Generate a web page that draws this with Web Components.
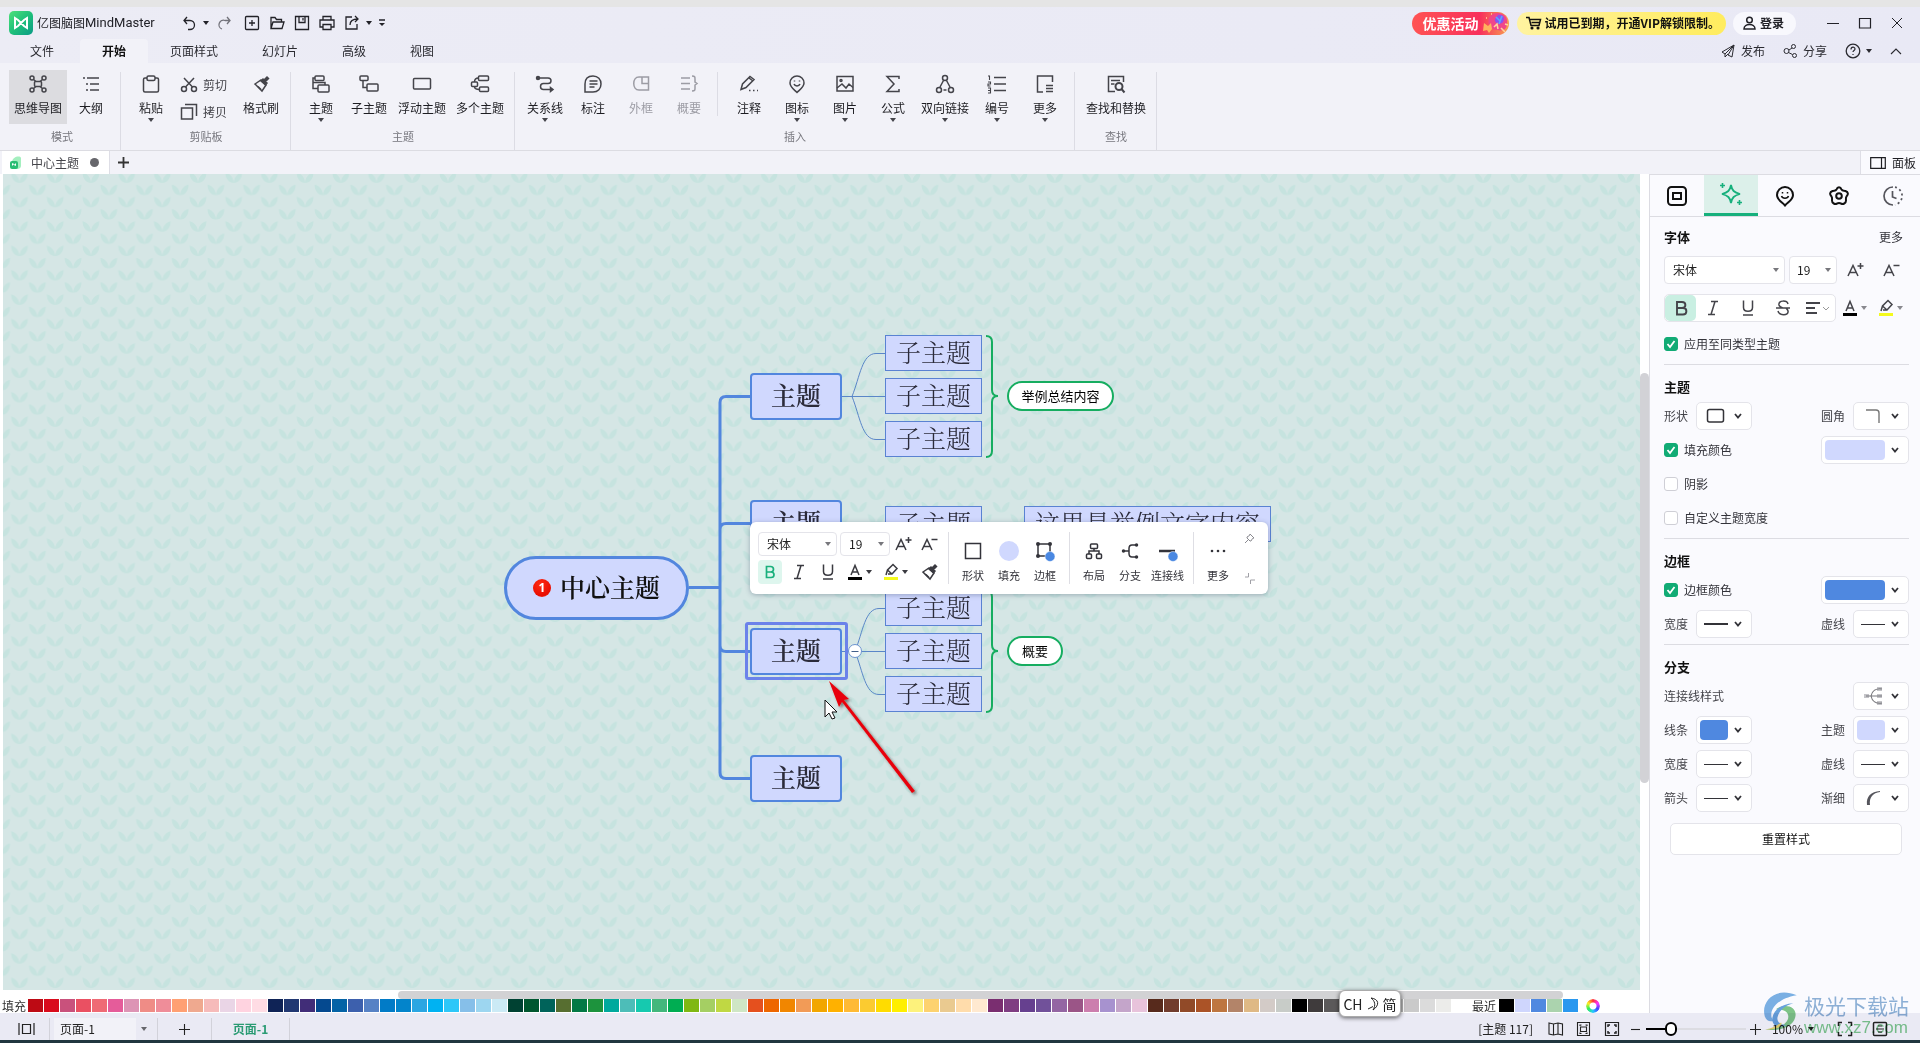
<!DOCTYPE html>
<html lang="zh-CN">
<head>
<meta charset="utf-8">
<title>亿图脑图MindMaster</title>
<style>
html,body{margin:0;height:100%}
body{font:12px/16px "Noto Sans CJK SC",sans-serif;color:#1d1d22;background:#f2f2f8}
</style>
</head>
<body>
<app-window></app-window>
<script>
const BASE = `
*{box-sizing:border-box}
button,select,input{font:inherit;color:inherit;margin:0;padding:0;border:0;background:none;border-radius:0}
button{display:inline-flex;align-items:center;justify-content:center;white-space:nowrap;cursor:pointer}
select{appearance:none;outline:none}
`;
function define(name, css, html, ready) {
  customElements.define(name, class extends HTMLElement {
    connectedCallback() {
      if (this.shadowRoot) return;
      const root = this.attachShadow({ mode: 'open' });
      const body = typeof html === 'function' ? html(this) : html;
      root.innerHTML = `<style>${BASE}${css}</style>${body}`;
      if (ready) ready(root, this);
    }
  });
}

/* Icon library: [width, height, markup] */
const BRUSH = '<path d="M3 9 9 5l5 5-4 6z"/><path d="M9 6 11 4l1 1 3-3 1.500 1.500-3 3L15 8l-1.500 2z" fill="currentColor"/><path d="M6 11.500l3 3"/>';
const SMILE = '<path d="M10 2a7 7 0 0 1 7 7c0 4-4 6.500-7 9.500C7 15.500 3 13 3 9a7 7 0 0 1 7-7z"/><path d="M7 10c1 2.600 5 2.600 6 0"/><path d="M7.500 6.500v1M12.500 6.500v1"/>';
const ICONS = {
  caret:[8,4,'<path d="M1 0h6L4 4z" fill="currentColor" stroke="none"/>'],
  chev:[10,8,'<path d="M2 2l3 3.500L8 2" stroke-width="1.800"/>'],
  logo:[24,24,'<defs><linearGradient id="g" x1="0" y1="0" x2="1" y2="1"><stop offset="0" stop-color="#4fe07a"/><stop offset=".5" stop-color="#1fc07a"/><stop offset="1" stop-color="#0a9a86"/></linearGradient></defs><rect width="24" height="24" rx="5" fill="url(#g)" stroke="none"/><path d="M6 7v10l3-2 6-6 3-2v10l-3-2-6-6z" stroke="#fff" stroke-width="2"/>'],
  undo:[16,16,'<path d="M6 2 3 5.500 6 9M3 5.500h6a4.500 4.500 0 0 1 0 9H7" stroke-width="1.300"/>'],
  redo:[16,16,'<g opacity=".6"><path d="M10 2l3 3.500L10 9M13 5.500H8a4.500 4.500 0 0 0-3 8.500" stroke-width="1.300"/></g>'],
  newdoc:[16,16,'<g stroke-width="1.300"><rect x="1.500" y="1.500" width="13" height="13" rx="1"/><path d="M8 5v6M5 8h6"/></g>'],
  open:[16,16,'<path d="M2 13.500v-11h4l1.500 2h5v2.500M2 13.500l2-6.500h11l-2 6.500z" stroke-width="1.300"/>'],
  save:[16,16,'<g stroke-width="1.300"><path d="M1.500 1.500h13v13h-13z"/><path d="M5 1.500v6h6v-6M9 3v2.500"/></g>'],
  print:[16,16,'<g stroke-width="1.300"><path d="M4 5V1.500h8V5M4 12H1V5h14v7h-3"/><path d="M4 9.500h8v5H4z"/></g>'],
  export:[16,16,'<g stroke-width="1.300"><path d="M8 2H2v12h11V9"/><path d="M6 10c0-4 3-6 8-6M11 1l3 3-3 3"/></g>'],
  more:[8,8,'<path d="M1 1h6"/><path d="M1 4h6L4 7z" fill="currentColor" stroke="none"/>'],
  cart:[15,14,'<path d="M0 1.500h3l2 8h8l1.500-6H4M5.500 6.500h8"/><circle cx="6" cy="12" r=".8"/><circle cx="12" cy="12" r=".8"/>'],
  user:[13,14,'<circle cx="6.500" cy="4" r="2.800"/><path d="M1 13c0-6 11-6 11 0z"/>'],
  min:[12,12,'<path d="M0 6.500h12" stroke-width="1"/>'],
  max:[12,12,'<path d="M.500 1.500h11v9.500h-11z" stroke-width="1.200"/>'],
  close:[12,12,'<path d="M1 1l10 10M11 1 1 11" stroke-width="1"/>'],
  plane:[14,14,'<path d="M13 1 1 8l3 2zM13 1 11 13l-4-2zM4 10v3l3-3" stroke-width="1"/>'],
  share:[14,14,'<g stroke-width="1"><circle cx="3.500" cy="7" r="2.500"/><circle cx="10.500" cy="2.500" r="2"/><circle cx="11.500" cy="11.500" r="2"/><path d="M6 6l3-2M5.500 8.500l4 2"/></g>'],
  help:[16,16,'<circle cx="8" cy="8" r="6.800" stroke-width="1.300"/><path d="M6 6.500c0-3 4-3 4-.5 0 1.500-2 1.500-2 3M8 11v1" stroke-width="1.200"/>'],
  up:[12,12,'<path d="M1 9l5-5 5 5" stroke-width="1.100"/>'],
  mind:[20,20,'<rect x="6.500" y="7.500" width="7" height="5" rx="1"/><circle cx="4" cy="4" r="2"/><circle cx="16" cy="4" r="2"/><circle cx="4" cy="16" r="2"/><circle cx="16" cy="16" r="2"/><path d="M5.500 5.500 8 7.500M14.500 5.500 12 7.500M5.500 14.500 8 12.500M14.500 14.500 12 12.500"/>'],
  outline:[20,20,'<path d="M2 4h2M6 4h12M5 10h2M9 10h9M5 16h2M9 16h9"/>'],
  paste:[20,20,'<rect x="2.500" y="4" width="15" height="14" rx="1.500"/><rect x="6" y="2" width="8" height="4.500" rx="1.500" fill="#f2f2f8"/>'],
  cut:[18,18,'<circle cx="4" cy="13" r="2.500"/><circle cx="14" cy="13" r="2.500"/><path d="M5.500 11 14 2M12.500 11 4 2"/>'],
  copy:[18,18,'<path d="M1.500 5h11v11h-11z"/><path d="M5 1.500h11.500V13"/>'],
  brush:[18,18,BRUSH],
  topic:[20,20,'<rect x="4" y="2" width="9" height="4.500" rx="1"/><rect x="7" y="11" width="11" height="7" rx="1"/><path d="M4 4H2v10.500h5M2 8.500h12V11"/>'],
  sub:[20,20,'<rect x="1" y="2" width="8" height="4.500" rx="1"/><rect x="8" y="10" width="11" height="7" rx="1"/><path d="M4 6.500v7h4"/>'],
  float:[20,20,'<rect x="1.500" y="4.500" width="17" height="10.500" rx="1"/>'],
  multi:[20,20,'<rect x="8.500" y="2" width="10" height="4.500" rx="1"/><rect x="1.500" y="8" width="6" height="4.500" rx="1"/><rect x="9.500" y="13" width="9" height="4.500" rx="1"/><path d="M8.500 4C5 4 4.500 6 4.500 8M4.500 12.500c0 2 1 3 5 3"/>'],
  relation:[20,20,'<path d="M3 4h10c4 0 4 5.500 0 5.500H8.500c-4 0-4 6 0 6H17"/><circle cx="3" cy="4" r="1.500" fill="currentColor"/><path d="M15.500 13.500 18 15.500 15.500 17.500z" fill="currentColor"/>'],
  note:[20,20,'<path d="M10 2c5 0 8 3.500 8 8s-3 8-8 8H2v-8c0-5 3-8 8-8z"/><path d="M6.500 7h8M6.500 10h8M6.500 13h5"/>'],
  outer:[20,20,'<path d="M8 3h9.500v13H8c-7 0-7-13 0-13zM11 3v6.500h6.500"/>'],
  summary:[20,20,'<path d="M2 4h9M2 9.500h9M2 15h9M13 2c3 0 3 1 3 3v3l2 1.500-2 1.500v3c0 2 0 3-3 3"/>'],
  comment:[20,20,'<path d="M2 15.500 3.500 10 11 2.500l4 3L7 13.500zM10 4l4 3M2 15.500l5-2M10 16.500h1.500M14 16.500h1.500M18 16.500h1"/>'],
  mark:[20,20,SMILE],
  image:[20,20,'<rect x="2" y="2.500" width="16" height="14.500"/><circle cx="6" cy="6.500" r="1"/><path d="M2 14l5-4 4 4 3-4 4 3.500"/>'],
  sigma:[20,20,'<path d="M16 5V2.500H4L11 10l-7 7.500h12V15"/>'],
  link:[20,20,'<circle cx="10" cy="4" r="2.500"/><circle cx="4" cy="16" r="2.500"/><circle cx="16" cy="16" r="2.500"/><path d="M8.500 6.500 5 13M11.500 6.500 15 13M8.500 16h3"/>'],
  number:[20,20,'<path d="M7 3.500h12M7 10h12M7 16.500h12"/><path d="M1 2h1.500v4M1 8h2.500v2H1v2h2.500M1 14h2.500v5H1M1 16.500h2.500" stroke-width="1.100"/>'],
  moredoc:[20,20,'<path d="M17.500 8V2H2.500v16H8M11 11.500h7M11 14.500h7M11 17.500h7"/>'],
  find:[20,20,'<path d="M17.500 8V2.500h-15v15H9M5 6.500h9M5 10h3.500"/><circle cx="13" cy="12.500" r="3.500" stroke-width="2"/><path d="M15.500 15l3 3.500" stroke-width="2"/>'],
  doc:[12,14,'<path d="M2 6c0-5 8-7 9-4v8c0 2-2 3-4 3H2z" fill="#a4efbf" stroke="none"/><rect x="0" y="5" width="8" height="8" rx="2" fill="#29bd73" stroke="none"/><path d="M2.500 9.500v-2l3 2v-2" stroke="#fff" stroke-width="1"/>'],
  plus:[13,13,'<path d="M6.500 1v11M1 6.500h11" stroke-width="1.800"/>'],
  thinplus:[13,13,'<path d="M6.500 1v11M1 6.500h11" stroke-width="1.100"/>'],
  minus:[12,13,'<path d="M1 6.500h9" stroke-width="1.100"/>'],
  panel:[16,12,'<path d="M.700.700h14.600v10.600H.700zM11.500.700v10.600" stroke-width="1.200"/>'],
  t1:[22,22,'<rect x="2" y="2" width="18" height="18" rx="3.500" stroke-width="2"/><rect x="7" y="8" width="8" height="6" stroke-width="2"/>'],
  t2:[24,24,'<path d="M12 3c1 5.500 3 7.500 9 9-6 1.500-8 3.500-9 9-1-5.500-3-7.500-9-9 6-1.500 8-3.500 9-9z" stroke-width="1.800"/><path d="M3.500 1v5M1 3.500h5M20.500 18v5M18 20.500h5" stroke-width="1.600"/>'],
  t3:[22,22,'<path d="M11 2a8 8 0 0 1 8 8c0 5-5 7-8 10.500C8 17 3 15 3 10a8 8 0 0 1 8-8z" stroke-width="2"/><path d="M7.500 11c1 3 6 3 7 0M8.500 7v1.500M13.500 7v1.500"/>'],
  t4:[22,22,'<path d="M8.500 4.500c1-3 4-3 5 0 1 1.500 2 1 4 1.500 3 1 3 3.500 1 5.500-1 1.500-.5 2.500-.5 4 0 3-3 4-5 3-1.500-.8-2.500-.8-4 0-2 1-5 0-5-3 0-1.500.5-2.500-.5-4-2-2-2-4.500 1-5.500 2-.5 3 0 4-1.500z" stroke-width="2"/><circle cx="11" cy="11" r="2.800" stroke-width="2"/>'],
  t5:[22,22,'<g stroke="#55555c" stroke-width="1.700"><path d="M11 2a9 9 0 0 0 0 18M10.500 6v6l4 1.500"/><path d="M13 2.200a9 9 0 0 1 0 17.600" stroke-dasharray="2 2.800"/></g>'],
  check:[14,14,'<path d="M3.500 7l2.500 3 4.500-6" stroke="#fff" stroke-width="1.800"/>'],
  shape:[20,16,'<rect x="1.500" y="1.500" width="16" height="12.500" rx="2"/>'],
  corner:[20,16,'<path d="M3 2h10q3 0 3 3v10" stroke="#777" stroke-width="1.400"/>'],
  line:[24,5,'<path d="M0 2.500h24" stroke-width="1"/>'],
  thick:[24,4,'<path d="M0 2h24" stroke-width="2"/>'],
  fork:[22,18,'<path d="M2 9h5M15 2h5M15 9h5M15 16h5" stroke="#c4c4c8" stroke-width="4"/><path d="M4 9h16M20 2c-6-1-10 2-11 7 1 5 5 8 11 7" stroke="#77777c" stroke-width="1.200"/>'],
  taper:[20,16,'<path d="M4 15C3 6 8 2 17 1v1C10 3 6 7 7 15z" fill="#55555c" stroke="none"/>'],
  bold:[16,18,'<path d="M4 3h5c4.500 0 4.500 6 0 6H4zM4 9h6c4.500 0 4.500 6.500 0 6.500H4z" stroke-width="1.900"/>'],
  sbold:[16,18,'<path d="M4.500 3.500h4c4 0 4 5.500 0 5.500h-4zM4.500 9h4.500c4 0 4 5.500 0 5.500H4.500z" stroke-width="1.700"/>'],
  italic:[16,18,'<path d="M6 2.500h7M3 15.500h7M10 2.500l-4 13"/>'],
  under:[16,18,'<path d="M3.500 1.500v7c0 5 9 5 9 0v-7M3 16h10"/>'],
  strike:[16,18,'<path d="M13 5c-1-4-10-4-9 1 .5 2 3 2.500 4 3M3 12c1 5 11 5 10 0-.3-1.500-1-2-2-3M1 9h14"/>'],
  align:[24,14,'<path d="M1 2h14M1 7h9M1 12h11" stroke-width="1.800"/><path d="M18 6l3 3 3-3" stroke="#999" stroke-width="1"/>'],
  aplus:[20,18,'<path d="M3 15 8 4.500 13 15M5 11.500h6"/><path d="M15.500 2v6M12.500 5h6"/>'],
  aminus:[20,18,'<path d="M3 15 8 4.500 13 15M5 11.500h6"/><path d="M12.500 4.500h6"/>'],
  acolor:[14,18,'<path d="M3 12 7 2.500 11 12M4.500 9h5"/><path d="M0 15.500h14" stroke="#000" stroke-width="3"/>'],
  marker:[14,18,'<path d="M2 12 3.500 7 9 1.500l4 4L8 11H4M3.500 7 8 11"/><path d="M0 15.500h14" stroke="#f4fa1c" stroke-width="3"/>'],
  square:[18,18,'<path d="M1.500 1.500h15v15h-15z"/>'],
  fill:[20,20,'<circle cx="10" cy="10" r="10" fill="#d0d8fe" stroke="none"/>'],
  frame:[20,20,'<path d="M3 3h12v12H3z"/><g fill="currentColor" stroke="none"><circle cx="3" cy="3" r="2"/><circle cx="15" cy="3" r="2"/><circle cx="3" cy="15" r="2"/></g><circle cx="15" cy="15.500" r="5" fill="#4a88e2" stroke="#fff" stroke-width=".500"/>'],
  layout:[18,18,'<rect x="5.500" y="2" width="7" height="4.500" rx="1"/><rect x="1.500" y="12" width="5" height="4.500" rx="1"/><rect x="11.500" y="12" width="5" height="4.500" rx="1"/><path d="M9 6.500V9M4 12V9h10v3"/>'],
  branch:[18,18,'<path d="M15 3h-4c-3 0-3 2-3 3.500v5C8 13 8 15 11 15h4M3 9h5"/><g fill="currentColor"><circle cx="15.500" cy="3" r="1"/><circle cx="2.500" cy="9" r="1"/><circle cx="15.500" cy="15" r="1"/></g>'],
  conn:[22,20,'<path d="M2 10h16" stroke-width="2.500"/><circle cx="16" cy="15.500" r="5" fill="#4a88e2" stroke="#fff" stroke-width=".500"/>'],
  dots:[16,8,'<g fill="currentColor" stroke="none"><circle cx="2" cy="4" r="1.300"/><circle cx="8" cy="4" r="1.300"/><circle cx="14" cy="4" r="1.300"/></g>'],
  pin:[11,11,'<path d="M6 1l4 4-1.500.500L7 8H6L3 5V4l2.500-1.500zM4 7 1 10" stroke="#8a8a90" stroke-width="1"/>'],
  size:[11,11,'<path d="M1 4h3.500V0M6.500 11V7H11" stroke="#a0a0a6" stroke-width="1"/>'],
  pages:[17,14,'<path d="M1 1v12M16 1v12M4.500 2.500h8v9h-8z" stroke-width="1.200"/>'],
  map:[16,16,'<path d="M1 2l4.500 1 4.500-1 4.500 1v11L10 13l-4.500 1L1 13zM5.500 3v11M10 2v11" stroke-width="1.100"/>'],
  fit:[16,16,'<path d="M1.500 1.500h12v13h-12zM4.500 6h6v4.500h-6zM4 5V4h1.500M11 5V4H9.500M4 11.500v1h1.500M11 11.500v1H9.500" stroke-width="1.100"/>'],
  full:[16,16,'<path d="M1.500 1.500h13v13h-13z" stroke-width="1.200"/><path d="M4 6V4h2M10 4h2v2M12 10v2h-2M6 12H4v-2"/>'],
  corners:[16,16,'<path d="M5 1.500H1.500V5M11 1.500h3.500V5M14.500 11v3.500H11M5 14.500H1.500V11"/>'],
  fitpage:[16,16,'<rect x="1.500" y="1.500" width="13" height="13" rx="1"/><path d="M4 8h8M6 5h4M6 11h4" stroke-width="1.200"/>'],
  wheel:[16,16,''],
  party:[28,24,'<path d="M8 7c4-8 17-6 18 2 1 8-3 12-9 10-8 0-11-6-9-12z" fill="#f0468a" stroke="none"/><path d="M17 4c6-1 7 4 5 7s-9 2-8-3z" fill="#8a52f0" stroke="none"/><path d="M3 12l4 3 3-3 1 6-3 4-2-3-4 1z" fill="#ffb35e" stroke="none"/><path d="M13 16l3-3 1 5M20 17l4 4M24 13l3 1M5 7h1M10 3h1" stroke="#ffd49a" stroke-width="1.600"/><path d="M15 6l4 4M21 5l-3 8" stroke="#59a7ff" stroke-width="1.600"/>']
};
define('mm-icon', `:host{display:inline-flex;flex:none;align-items:center;justify-content:center}svg{display:block;overflow:visible}
.wheel{width:14px;height:14px;border-radius:50%;background:conic-gradient(#f33,#f3f,#44f,#2cf,#3e5,#fe2,#f33);-webkit-mask:radial-gradient(circle,transparent 3px,#000 4px)}`,
  el => {
    const n = el.getAttribute('name');
    if (n === 'wheel') return '<div class="wheel"></div>';
    const [w, h, m] = ICONS[n];
    return `<svg width="${w}" height="${h}" viewBox="0 0 ${w} ${h}" fill="none" stroke="currentColor" stroke-width="1.500" aria-hidden="true">${m}</svg>`;
  });
const ic = n => `<mm-icon name="${n}"></mm-icon>`;
const ibtn = (n, label, cls = '') => `<button type="button" class="${cls}" aria-label="${label}">${ic(n)}</button>`;

/* Title bar */
define('title-bar', `
:host{display:flex;align-items:center;height:32px;padding-left:9px;color:#222228}
h1{margin:0 22px 0 4px;font-size:12px;font-weight:400;line-height:24px;display:flex}
h1 span{font:13px/24px Roboto,sans-serif}
.quick{display:flex;align-items:center}
.quick button{width:25px;height:24px}
.quick .c{width:8px}.quick .m{width:18px}.quick .r{width:30px}
.sp{flex:1}
.pill{height:23px;border-radius:12px;font-weight:700;gap:4px}
.sale{width:97px;justify-content:flex-start;padding-left:11px;gap:2px;font-size:14px;color:#fff;background:linear-gradient(90deg,#ff5353,#f8305c 70%,#f7a04f)}
.vip{margin-left:8px;padding:0 6px 0 9px;color:#111;background:linear-gradient(90deg,#fff3a0,#ffec5e)}
.login{margin:0 21px 0 7px;padding:0 12px 0 10px;background:#f8f8fd}
.w{width:32px;height:28px;margin-right:0}
.end{width:7px}
`, `${ic('logo')}<h1>亿图脑图<span>MindMaster</span></h1>
<div class="quick">${ibtn('undo','撤销')}${ibtn('caret','撤销列表','c')}${ibtn('redo','重做','r')}${['newdoc|新建','open|打开','save|保存','print|打印','export|导出'].map(s=>ibtn(...s.split('|'))).join('')}${ibtn('caret','导出列表','c')}${ibtn('more','自定义','m')}</div>
<span class="sp"></span>
<button class="pill sale">优惠活动${ic('party')}</button>
<button class="pill vip">${ic('cart')}试用已到期，开通VIP解锁限制。</button>
<button class="pill login">${ic('user')}登录</button>
${ibtn('min','最小化','w')}${ibtn('max','最大化','w')}${ibtn('close','关闭','w')}<span class="end"></span>`);

define('menu-tabs', `
:host{display:flex;height:24px;padding-left:4px;color:#2a2a30}
button{padding:0 22px;height:24px}
.file{padding:0 26px}
.on{background:#f2f2f8;font-weight:700;color:#111;border-radius:4px 4px 0 0}
.sp{flex:1}
.r{padding:0;gap:6px;margin-right:18px}
.h{padding:0;gap:4px;margin:0 7px 0 0}
.u{padding:0;width:32px;margin-right:8px}
`, `<button class="file">文件</button><button class="on">开始</button><button>页面样式</button><button>幻灯片</button><button>高级</button><button>视图</button>
<span class="sp"></span><button class="r">${ic('plane')}发布</button><button class="r">${ic('share')}分享</button><button class="h" aria-label="帮助">${ic('help')}${ic('caret')}</button>${ibtn('up','收起','u')}`);

/* Ribbon */
define('ribbon-item', `
:host{display:block;width:48px;height:54px}
:host([wide]){width:58px}
:host([link]){width:56px}
:host([find]){width:70px}
:host([active]){background:#dcdce0}
:host([off]) button{color:#9c9ca4}
button{flex-direction:column;justify-content:flex-start;width:100%;height:100%;padding-top:4px}
mm-icon{color:#44444a;height:20px}
:host([off]) mm-icon{color:#9c9ca4}
.t{margin-top:6px;line-height:16px}
.c{height:4px;margin-top:2px}
`, el => `<button type="button">${ic(el.getAttribute('icon'))}<span class="t"><slot></slot></span>${el.hasAttribute('menu') ? '<mm-icon class="c" name="caret"></mm-icon>' : ''}</button>`);
define('ribbon-group', `
:host{display:flex;flex-direction:column;align-items:center;padding:7px 6px 0;background:linear-gradient(#dcdce4,#dcdce4) right bottom/1px 78px no-repeat}
.row{display:flex}
.l{margin-top:4px;font-size:11px;color:#77777e}
`, el => `<div class="row"><slot></slot></div><div class="l">${el.getAttribute('label')}</div>`);
const item = (i, t, a = '') => `<ribbon-item icon="${i}" ${a}>${t}</ribbon-item>`;
define('ribbon-bar', `
:host{display:flex;height:88px;background:#f2f2f8;border-bottom:1px solid #dcdce2;padding-left:3px}
.small{display:flex;flex-direction:column;width:62px;padding:2px 0 0 5px;gap:2px}
.small button{justify-content:flex-start;gap:5px;height:25px;color:#44444a}
.s{width:12px;height:44px;margin-top:2px;background:linear-gradient(#dcdce4,#dcdce4) 4px 0/1px 100% no-repeat}
`, `<ribbon-group label="模式">${item('mind','思维导图','wide active')}${item('outline','大纲')}</ribbon-group>
<ribbon-group label="剪贴板">${item('paste','粘贴','menu')}<div class="small"><button>${ic('cut')}剪切</button><button>${ic('copy')}拷贝</button></div>${item('brush','格式刷')}</ribbon-group>
<ribbon-group label="主题">${item('topic','主题','menu')}${item('sub','子主题')}${item('float','浮动主题','wide')}${item('multi','多个主题','wide')}</ribbon-group>
<ribbon-group label="插入">${item('relation','关系线','menu')}${item('note','标注')}${item('outer','外框','off')}${item('summary','概要','off')}<span class="s"></span>${item('comment','注释')}${item('mark','图标','menu')}${item('image','图片','menu')}${item('sigma','公式','menu')}${item('link','双向链接','link menu')}${item('number','编号','menu')}${item('moredoc','更多','menu')}</ribbon-group>
<ribbon-group label="查找">${item('find','查找和替换','find')}</ribbon-group>`);

define('doc-tabs', `
:host{display:flex;height:23px;background:#f2f2f8;padding-left:2px}
.tab{width:108px;background:#fff;justify-content:flex-start;padding-left:8px;gap:9px;border-right:1px solid #dedee6;color:#44444a}
i{width:9px;height:9px;border-radius:50%;background:#66666b;margin-left:2px}
.add{width:27px;color:#333}
.sp{flex:1}
.panel{background:#fafafe;border-left:1px solid #dedee6;padding:0 4px 0 9px;gap:6px}
`, `<button class="tab">${ic('doc')}中心主题<i></i></button>${ibtn('plus','新建标签','add')}<span class="sp"></span><button class="panel">${ic('panel')}面板</button>`);

/* Mind map */
define('mind-node', `
:host{position:absolute;display:flex;align-items:center;justify-content:center;white-space:nowrap;color:#2b2b3a;font:25px/34px "Noto Serif CJK SC","Noto Serif SC","Noto Sans CJK SC",serif;background:#d0d8fe;border:1px solid #5a82d2;padding-bottom:4px}
:host([kind=center]){border:3px solid #5286de;border-radius:32px;color:#111;font-weight:600;gap:9px}
:host([kind=topic]){border:2px solid #5286de;border-radius:4px;font-weight:600;padding-bottom:5px}
:host([kind=sub]){font-weight:300}
:host([kind=pill]){font:13px/20px "Noto Sans CJK SC",sans-serif;color:#000;background:#fff;border:2px solid #16ad60;border-radius:15px;padding:0}
`, '<slot></slot>');

const pick = (label, val, opts) => `<label class="pick"><select aria-label="${label}"><option>${val}</option>${opts.map(o=>`<option>${o}</option>`).join('')}</select>${ic('caret')}</label>`;
const PICK = `
.pick{position:relative;display:flex;align-items:center;background:#fff;border:1px solid #e4e4ea;border-radius:4px}
.pick select{flex:1;min-width:0;width:100%;height:100%;padding-left:8px;color:#222}
.pick mm-icon{position:absolute;right:4px;color:#77777c;pointer-events:none}
`;
define('float-bar', `
:host{display:flex;height:72px;background:#fff;border-radius:6px;box-shadow:0 1px 5px rgba(40,60,90,.35);padding:10px 8px;color:#3a3a40}
${PICK}
.l{display:flex;flex-direction:column;gap:4px;width:186px}
.r{display:flex;height:24px;align-items:center}
.r button{height:24px}
.a{width:79px;height:24px;margin-right:3px;display:flex}.b{width:50px;height:24px;display:flex}.a .pick,.b .pick{flex:1}
.k{width:26px}
.bold{width:24px;background:#def6ee;border-radius:4px;color:#19b07c;margin-right:2px}
.i{width:29px}.g{width:36px;gap:3px}
.sep{width:1px;background:#dedee4;margin:0 6px 0 4px}
.sep.n{margin:0 6px}
.it{flex-direction:column;width:36px;height:52px;font-size:11px;color:#33333a;padding-top:2px}
.it mm-icon{height:32px}
.it.w{width:39px}
.e{display:flex;flex-direction:column;justify-content:space-between;margin:0 4px 0 8px}
.e button{height:12px}
`, `<div class="l"><div class="r"><span class="a">${pick('字体','宋体',['黑体'])}</span><span class="b">${pick('字号','19',['20'])}</span>${ibtn('aplus','增大字号','k')}${ibtn('aminus','减小字号','k')}</div>
<div class="r">${ibtn('sbold','加粗','bold')}${ibtn('italic','斜体','i')}${ibtn('under','下划线','i')}<button class="g" aria-label="字体颜色">${ic('acolor')}${ic('caret')}</button><button class="g" aria-label="突出显示">${ic('marker')}${ic('caret')}</button>${ibtn('brush','格式刷','i')}</div></div>
<span class="sep"></span>${[['square','形状'],['fill','填充'],['frame','边框']].map(([i,t])=>`<button class="it">${ic(i)}${t}</button>`).join('')}
<span class="sep n"></span><button class="it">${ic('layout')}布局</button><button class="it">${ic('branch')}分支</button><button class="it w">${ic('conn')}连接线</button>
<span class="sep n"></span><button class="it">${ic('dots')}更多</button><span class="e">${ibtn('pin','固定')}${ibtn('size','缩放')}</span>`);

const NODES = [
  ['topic',747,199,92,47,'主题'],['topic',747,326,92,47,'主题'],['topic',747,454,92,47,'主题'],['topic',747,581,92,47,'主题'],
  ['sub',882,161,97,36,'子主题'],['sub',882,204,97,36,'子主题'],['sub',882,247,97,36,'子主题'],['sub',882,332,97,36,'子主题'],
  ['sub',882,416,97,36,'子主题'],['sub',882,459,97,36,'子主题'],['sub',882,502,97,36,'子主题'],
  ['sub',1021,332,247,36,'这里是举例文字内容'],
  ['pill',1004,207,107,30,'举例总结内容'],['pill',1004,462,56,30,'概要']
];
const fan = (x, y) => `<path d="M839 ${y}H882M${x} ${y}C${x+8} ${y-20} ${x+10} ${y-43} ${x+24} ${y-43}H882M${x} ${y}C${x+8} ${y+20} ${x+10} ${y+43} ${x+24} ${y+43}H882"/>`;
const brace = y => `<path d="M983 ${y-60}q6 0 6 6v48q0 6 6 6q-6 0-6 6v49q0 6-6 6"/>`;
define('map-board', `
:host{display:block;position:relative;flex:1;overflow:hidden;background:#d5e6e5}
svg{position:absolute;inset:0;width:100%;height:100%}
.ring{position:absolute;left:742px;top:448px;width:103px;height:58px;border:3px solid #6b82ea;border-radius:3px}
float-bar{position:absolute;left:747px;top:348px;width:518px}
.no{width:18px;height:18px;margin-top:4px;border-radius:50%;background:radial-gradient(circle at 40% 30%,#ff2a12,#e80c00 70%,#ff8a5a);color:#fff;font:700 12px/18px "Noto Sans",sans-serif;text-align:center}
.top{pointer-events:none}
`, `<svg fill="none"><defs><pattern id="leaf" width="357" height="244" patternUnits="userSpaceOnUse" patternTransform="scale(.1) translate(165 40)">
<g fill="#c6e3df"><path d="M179 170C130 175 95 125 95 65 140 75 175 110 179 170z"/><path d="M179 170C228 175 263 125 263 65 218 75 183 110 179 170z"/></g>
<g fill="#c6e3df"><path d="M0 292C-49 297-84 247-84 187-39 197-4 232 0 292z"/><path d="M0 292C49 297 84 247 84 187 39 197 4 232 0 292z"/><path d="M357 292C308 297 273 247 273 187 318 197 353 232 357 292z"/><path d="M0 48C-49 53-84 3-84-57-39-47-4-12 0 48z"/><path d="M0 48C49 53 84 3 84-57 39-47 4-12 0 48z"/><path d="M357 48C308 53 273 3 273-57 318-47 353-12 357 48z"/></g>
</pattern></defs><rect width="100%" height="100%" fill="url(#leaf)"/>
<g stroke="#5286de" stroke-width="3"><path d="M686 413.500H717M747 222.500H723q-6 0-6 6V598.500q0 6 6 6H747M717 355.500q0-6 6-6H747M717 471.500q0 6 6 6H747"/></g>
<g stroke="#5a86c8" stroke-width="1">${fan(849,222.5)}${fan(852,477.5)}</g>
<g stroke="#16ad60" stroke-width="2">${brace(222)}${brace(477)}</g></svg>
<mind-node kind="center" style="left:501px;top:382px;width:185px;height:64px"><span class="no">1</span>中心主题</mind-node>
${NODES.map(([k,x,y,w,h,t])=>`<mind-node kind="${k}" style="left:${x}px;top:${y}px;width:${w}px;height:${h}px">${t}</mind-node>`).join('')}
<div class="ring"></div>
<float-bar></float-bar>
<svg class="top" fill="none"><defs><filter id="sh" x="-20%" y="-20%" width="150%" height="150%"><feDropShadow dx="2" dy="2" stdDeviation="1.500" flood-color="#333" flood-opacity=".6"/></filter></defs>
<circle cx="852" cy="477" r="6.500" fill="#fff" stroke="#6d94cf"/><path d="M848.500 477.500h7" stroke="#44608a"/>
<g filter="url(#sh)"><path d="M826 507l20 18-5 1 71 91-3 2-70-91-3 5z" fill="#e8060a"/></g>
<path d="M822 526v17l4-4 3 6 3-1-3-6h5z" fill="#fff" stroke="#111"/></svg>`);

define('swatch-strip', `
:host{display:flex;height:14px;align-items:stretch;background:#fff;padding-left:2px}
span{line-height:14px;width:26px;white-space:nowrap;color:#333}
b{flex:none;width:15px;height:13px;margin-right:1px}
.rec{margin-left:4px;width:27px}
mm-icon{margin-left:7px}
`, () => {
  const c = 'bd0a14 d90b1c c9517c ea5062 ef6a75 e55c9a dd94b5 ef8c86 ef8d99 ffa073 efa98f f6bbba ead5e6 ffd3e0 ffdce4 0f2356 213872 412d78 05498f 0463a6 3d60ad 5782c5 017bc7 0384cb 2ba6e2 00b2f2 2ec7f8 86bfe9 9dd6f0 cbeaf5 004132 00572f 00635a 576e30 037945 1d933d 00a99d 4dbdb8 16c9af 43b77c 00ad52 80b813 a5cf63 c0d843 cfe6c5 e5501e ee6600 f18600 f29b57 f2a600 ffb100 ffba35 fbcb30 ffdc00 ffef00 fdf27c fdd26f eaca90 ffdcab ffe9d0 7a2e70 7f3e82 66408f 71519a 9466a3 9b5587 cc7eae a792cf c4a5ca e8c3db 572a1c 713c2d 914a28 ab5327 be7640 b38469 dfb985 d3cbc7 c8ccc8 000000 3f3b3c 5b595a 7a7a7a 909090 a5a5a5 b8b8b8 cacaca dbdbdb ececea ffffff'.split(' ');
  const r = '000000 cfd6fd 5089e0 abd3ae 2a98ef'.split(' ');
  const m = a => a.map(x => `<b style="background:#${x}"></b>`).join('');
  return `<span>填充</span>${m(c)}<span class="rec">最近</span>${m(r)}${ic('wheel')}`;
});

/* Style panel */
define('style-picker', `
:host{display:block;width:56px;height:28px}
:host([wide]){width:88px}
button{width:100%;height:100%;background:#fff;border:1px solid #e4e4ea;border-radius:5px;justify-content:space-between;padding:0 8px 0 6px;color:#333338}
.sw{width:28px;height:20px;border-radius:4px;margin-left:-3px}
:host([wide]) .sw{width:60px}
.g{flex:1;margin-right:4px}
`, el => `<button type="button" aria-label="${el.getAttribute('label')}">${el.hasAttribute('color') ? `<span class="sw" style="background:${el.getAttribute('color')}"></span>` : `<mm-icon class="g" name="${el.getAttribute('icon')}"></mm-icon>`}${ic('chev')}</button>`);
define('check-field', `
:host{display:block}
label{display:flex;align-items:center;gap:6px;color:#33333a}
.b{position:relative;display:flex}
input{appearance:none;width:14px;height:14px;border:1px solid #cfcfd6;border-radius:3px;background:#fff}
input:checked{background:#11ab75;border-color:#11ab75}
mm-icon{position:absolute;inset:0;pointer-events:none}
`, el => `<label><span class="b"><input type="checkbox" ${el.hasAttribute('checked') ? 'checked' : ''}>${el.hasAttribute('checked') ? ic('check') : ''}</span><slot></slot></label>`);
define('panel-section', `
:host{display:block;margin:0 11px 0 14px;padding-bottom:3px;border-bottom:1px solid #dcdce2}
:host([last]){border:0}
header{display:flex;justify-content:space-between;align-items:center;height:34px;padding-top:10px}
:host([first]) header{height:36px;padding:4px 6px 0 0}
h2{margin:0;font-size:13px;line-height:20px;font-weight:700;color:#111}
`, el => `<header><h2>${el.getAttribute('label')}</h2><slot name="extra"></slot></header><slot></slot>`);
const pk = (t, a) => `<span class="pk">${t}<style-picker label="${t}" ${a}></style-picker></span>`;
define('style-panel', `
:host{display:block;width:271px;background:#fafafe;border-left:1px solid #dcdce2;border-top:1px solid #dcdce2}
${PICK}
nav{display:flex;height:42px;border-bottom:1px solid #dcdce2}
nav button{flex:1;color:#111}
nav .on{background:#dcf0ea;color:#16b07c;border-bottom:3px solid #16b07c}
.row{display:flex;height:34px;align-items:center;justify-content:space-between;color:#44444a}
.pk{display:flex;align-items:center;gap:8px}
.f{justify-content:flex-start}
.a,.b{display:flex;height:28px;margin-right:4px;width:121px}.b{width:48px;margin-right:0}.a .pick,.b .pick{flex:1}
.b .pick select{padding-left:7px}
.k{width:36px;height:28px}
.r2{margin-top:4px}.r3{margin-top:2px}
.seg{display:flex;width:173px;height:28px;background:#fff;border:1px solid #e4e4ea;border-radius:5px}
.seg button{flex:1}
.seg .on{flex:none;width:31px;background:#c9efe2;border-radius:5px}
.g{width:36px;gap:3px;margin-left:2px;color:#44444a}
.g+.g{margin-left:0}
.g mm-icon+mm-icon{color:#88888e}
.reset{display:flex;width:232px;height:32px;margin:5px 18px 0 20px;background:#fff;border:1px solid #e4e4ea;border-radius:5px;color:#111}
.more{color:#33333a}
`, `<nav>${ibtn('t1','页面')}${ibtn('t2','样式','on')}${ibtn('t3','图标')}${ibtn('t4','剪贴画')}${ibtn('t5','历史')}</nav>
<panel-section label="字体" first><button slot="extra" class="more">更多</button>
<div class="row f"><span class="a">${pick('字体','宋体',['黑体'])}</span><span class="b">${pick('字号','19',['20'])}</span>${ibtn('aplus','增大字号','k')}${ibtn('aminus','减小字号','k')}</div>
<div class="row f r2"><span class="seg">${ibtn('bold','加粗','on')}${ibtn('italic','斜体')}${ibtn('under','下划线')}${ibtn('strike','删除线')}${ibtn('align','对齐')}</span><button class="g" aria-label="字体颜色">${ic('acolor')}${ic('caret')}</button><button class="g" aria-label="突出显示">${ic('marker')}${ic('caret')}</button></div>
<div class="row r3"><check-field checked>应用至同类型主题</check-field></div></panel-section>
<panel-section label="主题"><div class="row">${pk('形状','icon="shape"')}${pk('圆角','icon="corner"')}</div>
<div class="row"><check-field checked>填充颜色</check-field><style-picker wide color="#d0d8fe" label="填充颜色"></style-picker></div>
<div class="row"><check-field>阴影</check-field></div><div class="row"><check-field>自定义主题宽度</check-field></div></panel-section>
<panel-section label="边框"><div class="row"><check-field checked>边框颜色</check-field><style-picker wide color="#4f88e0" label="边框颜色"></style-picker></div>
<div class="row">${pk('宽度','icon="thick"')}${pk('虚线','icon="line"')}</div></panel-section>
<panel-section label="分支" last><div class="row">连接线样式<style-picker icon="fork" label="连接线样式"></style-picker></div>
<div class="row">${pk('线条','color="#4f88e0"')}${pk('主题','color="#d0d8fe"')}</div>
<div class="row">${pk('宽度','icon="line"')}${pk('虚线','icon="line"')}</div>
<div class="row">${pk('箭头','icon="line"')}${pk('渐细','icon="taper"')}</div></panel-section>
<button class="reset">重置样式</button>`);

define('status-bar', `
:host{display:flex;align-items:center;height:27px;background:#eaeaf4;color:#222;padding:5px 0 0 3px}
.c{height:22px;border-right:1px solid #d2d2da}
.p{width:47px}.add{width:54px}
.sel{position:relative;display:flex;align-items:center;width:108px;padding-left:4px}
select{width:82px;height:22px;padding-left:6px;background:#f2f2f8}
.sel mm-icon{position:absolute;right:9px;color:#66666c}
.page{width:78px;color:#2a9b73;font-weight:700}
.sp{flex:1}
.i{width:28px;height:22px}
.th{margin-right:9px}
.z{width:20px;height:22px}
input{appearance:none;width:100px;height:14px;background:linear-gradient(90deg,#000 26px,#dcdce2 26px) center/100% 2px no-repeat}
input::-webkit-slider-thumb{appearance:none;width:12px;height:14px;border:2px solid #000;border-radius:7px;background:#fff}
.pct{gap:4px;margin:0 12px 0 6px}
.e{width:35px;height:22px}
.end{width:23px}
`, `${ibtn('pages','页面列表','c p')}<label class="c sel"><select aria-label="页面"><option>页面-1</option></select>${ic('caret')}</label>${ibtn('thinplus','添加页面','c add')}<button class="c page">页面-1</button>
<span class="sp"></span><span class="th">[主题 117]</span>${ibtn('map','导航','i')}${ibtn('fit','适应','i')}${ibtn('full','全屏','i')}${ibtn('minus','缩小','z')}<input type="range" aria-label="缩放" min="0" max="100" value="22">${ibtn('thinplus','放大','z')}<button class="pct">100%${ic('caret')}</button>${ibtn('corners','聚焦','e')}${ibtn('fitpage','适应页面','e')}<span class="end"></span>`);

define('ime-badge', `
:host{position:absolute;left:1339px;bottom:26px;display:flex;align-items:center;justify-content:center;gap:4px;width:62px;height:27px;background:#fff;border-radius:6px;border:1px solid #aaa;box-shadow:0 1px 4px rgba(0,0,0,.6);font-size:14px;line-height:20px;color:#222}
`, `<span>CH</span><svg width="12" height="14" fill="none" stroke="#222"><path d="M4 1c8 1 9 7 2 12C9 8 8 4 4 1zM6 9.500l-5 2.500"/></svg><span>简</span>`);
define('site-mark', `
:host{position:absolute;right:10px;bottom:5px;display:flex;align-items:center;gap:2px;pointer-events:none;mix-blend-mode:multiply}
svg{display:block;margin-bottom:6px}
.t{display:flex;flex-direction:column;width:106px}
.n{font-size:21px;line-height:28px;color:#8fb3d6}
.u{font:17px/18px "Liberation Sans",sans-serif;color:#7fcb8f}
`, `<svg width="42" height="42" viewBox="0 0 44 48" fill="none" opacity=".85"><path d="M40 6C16-4 0 12 3 28c1 7 6 9 11 7-7-4-4-24 26-29z" fill="#66a6e0"/><path d="M16 22c12-8 26-2 22 10C35 42 20 48 4 45c12 0 23-4 26-12 2-8-5-11-14-11z" fill="#6cbf75"/><path d="M12 33c1-10 10-17 24-18-10 3-16 8-18 16-1 6 4 9 10 9-9 4-16 1-16-7z" fill="#4f95d8"/><path d="M4 45c8-1 14-4 18-8 3 3-3 9-18 8z" fill="#e8d35a"/></svg>
<div class="t"><span class="n">极光下载站</span><span class="u">www.xz7.com</span></div>`);

define('app-window', `
:host{display:flex;flex-direction:column;min-height:100vh;position:relative;overflow:hidden}
.edge{height:7px;background:#e5e5e5}
.head{background:linear-gradient(90deg,#ececf5,#e9e9f5)}
main{flex:1;display:flex;background:#fff}
.left{flex:1;display:flex;flex-direction:column;min-width:0}
.view{flex:1;display:flex;padding-left:3px}
.v{width:9px;padding:199px 0 0;background:#fff}
.v i{display:block;height:410px;border-radius:5px;background:#d2d2d6}
.h{height:9px;padding-top:1px}
.h i{display:block;height:8px;margin:0 86px 0 398px;border-radius:4px;background:#d2d2d4}
.foot{height:3px;background:#20363f}
`, `<div class="edge"></div><div class="head"><title-bar></title-bar><menu-tabs></menu-tabs></div>
<ribbon-bar></ribbon-bar><doc-tabs></doc-tabs>
<main><div class="left"><div class="view"><map-board></map-board><div class="v"><i></i></div></div><div class="h"><i></i></div><swatch-strip></swatch-strip></div><style-panel></style-panel></main>
<status-bar></status-bar><div class="foot"></div><ime-badge></ime-badge><site-mark></site-mark>`);
</script>
</body>
</html>
